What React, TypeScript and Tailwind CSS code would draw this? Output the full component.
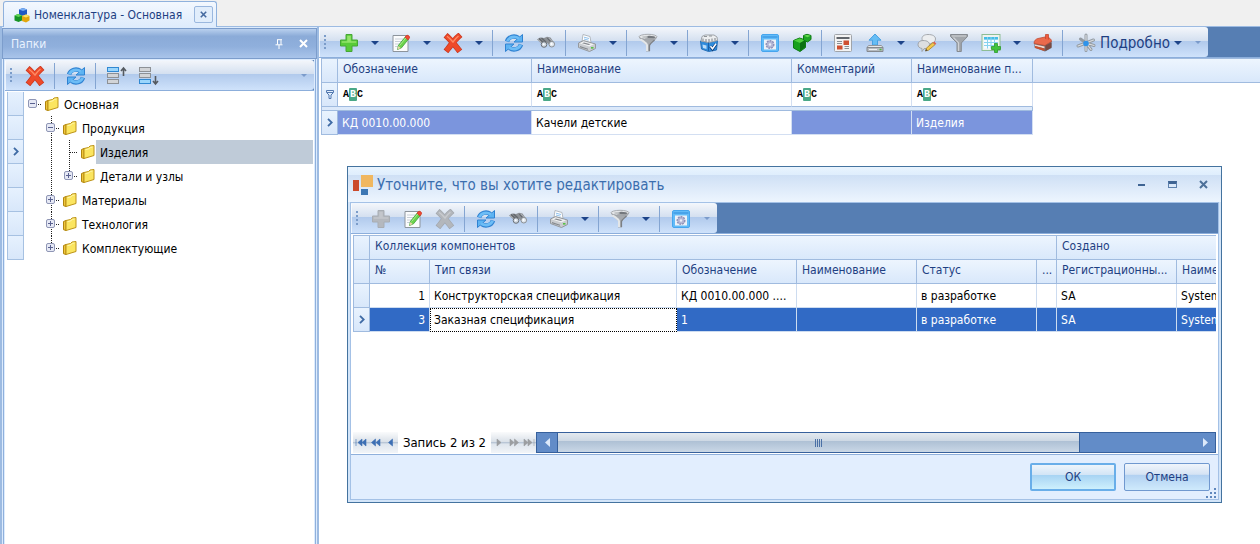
import type { ReactNode } from 'react';

type IconProps = { children: ReactNode; size?: string };

function Icon({ children, size = 'w-5 h-5' }: IconProps) {
  return (
    <svg viewBox="0 0 20 20" className={`${size} shrink-0`} fill="none" aria-hidden="true">
      {children}
    </svg>
  );
}

/* ---------- Toolbar icons ---------- */

function PlusIcon({ disabled = false }: { disabled?: boolean }) {
  return (
    <Icon>
      <path
        d="M7 1.5h6V7h5.500v6H13v5.500H7V13H1.500V7H7z"
        fill={disabled ? '#b4b8be' : '#58cb38'}
        stroke={disabled ? '#a8adb3' : '#46a636'}
        strokeLinejoin="round"
      />
      <path d="M8.200 2.700h3.600v5.500h5.500v1.600H2.700V8.200h5.500z" fill={disabled ? '#c3c6cb' : '#93e46a'} />
    </Icon>
  );
}

function CrossIcon({ disabled = false }: { disabled?: boolean }) {
  const shape = 'M4.800 4.200C8 7 11.500 11.500 15 16M15.200 3.800C11.500 7 8 12 4.800 16';
  return (
    <Icon>
      <path d={shape} stroke={disabled ? '#a2a7ad' : '#c8371f'} strokeWidth="6" strokeLinecap="square" />
      <path d={shape} stroke={disabled ? '#b3b7bc' : '#ee4a2a'} strokeWidth="4.600" strokeLinecap="square" />
      <path d="M4 3.200c3 2.200 4.500 4 6 5.800 1.600-2.200 3-4 5.500-6" stroke={disabled ? '#c8cbcf' : '#ff8a63'} strokeWidth="1.400" />
    </Icon>
  );
}

function EditIcon() {
  return (
    <Icon>
      <path d="M2 2.500h15v16H2z" fill="#fbfcfd" stroke="#8d949c" />
      <path d="M4 6h8M4 8.500h7M4 11h5M4 13.500h3" stroke="#c9d0d8" />
      <path d="m6.500 16.500 1-4.200 7-8.600 3 2.400-7 8.700z" fill="#6bd34c" stroke="#3b9e35" strokeWidth=".8" />
      <path d="m14 4.400 1.400-1.800c1.600-.9 3.600.8 3 2.300L17 6.800z" fill="#ef4a35" stroke="#d5402d" />
      <path d="m6.500 16.500.8-3.400 2.500 2z" fill="#e9d6a8" />
      <path d="m8.600 12.500 6.200-7.500" stroke="#a8ec8c" />
    </Icon>
  );
}

function RefreshIcon() {
  return (
    <Icon>
      <path d="M3 8.500C4.500 3.500 10.500 2 14.500 5" stroke="#2f82d2" strokeWidth="4.400" />
      <path d="M17 11.500c-1.500 5-7.500 6.500-11.500 3.500" stroke="#2f82d2" strokeWidth="4.400" />
      <path d="M18.500 1.500V9H10z" fill="#5db3f2" stroke="#2f82d2" strokeLinejoin="round" />
      <path d="M1.500 18.500V11H10z" fill="#5db3f2" stroke="#2f82d2" strokeLinejoin="round" />
      <path d="M3.300 8.200C5 4 10.500 2.500 15 5.500" stroke="#6dbdf6" strokeWidth="2.800" />
      <path d="M16.700 11.800c-1.700 4.200-7.200 5.700-11.700 2.700" stroke="#6dbdf6" strokeWidth="2.800" />
    </Icon>
  );
}

function BinocularsIcon() {
  return (
    <Icon>
      <path d="m1 6.500 3-2 4 .5 3-1.200 3.500.8 3.500 5-3 3.500-4-3-3.500 2.500z" fill="#8d9196" />
      <path d="M3 5.500 8 10M5.500 5 10 9M11.500 5l4 4.500" stroke="#62666b" strokeWidth="1.300" />
      <path d="m2 6.500 4 3.800M12.500 4.800l4 4" stroke="#b9bdc1" />
      <circle cx="8" cy="11.500" r="2.800" fill="#cfd8e1" stroke="#6b7076" />
      <circle cx="15.800" cy="11.200" r="2.800" fill="#dfe6ed" stroke="#8b9095" />
      <circle cx="7.700" cy="11.200" r="1" fill="#fff" />
      <circle cx="15.500" cy="11" r="1" fill="#fff" />
    </Icon>
  );
}

function PrinterIcon() {
  return (
    <Icon>
      <path d="m5 8.500 1-7 7 2 1 6z" fill="#fff" stroke="#b3b9c0" />
      <path d="M7 4.200 12 5.500M7 6l4.500 1.200" stroke="#8fc1ee" />
      <path d="m1.500 10 5-2.500L18.500 11v4.500l-6 3-11-4z" fill="#c9ccd0" stroke="#94999e" strokeLinejoin="round" />
      <path d="m2.500 10.200 4-1.700L17 11.200l-4.700 2.200z" fill="#f2f3f4" />
      <path d="m5 10.300 2-.8 6.500 1.700-1.800.8z" fill="#85898e" />
      <path d="m3 13 8 2.800v1L3 14.300z" fill="#83878c" />
      <path d="M14 14.800h2.500" stroke="#56c244" strokeWidth="1.600" />
    </Icon>
  );
}

function FunnelIcon() {
  return (
    <Icon>
      <path d="M1 4c.5 3 5 5 7 8v6.500h4V12c2-3 6.500-5 7-8z" fill="#a5a9ad" />
      <path d="M2.500 6C5 8.500 8 9.500 9 12v6" stroke="#e3e6e8" strokeWidth="2" />
      <path d="M16.500 7c-2 2-4.500 3.500-5 5.500v5.500" stroke="#7b7f84" strokeWidth="1.200" />
      <ellipse cx="10" cy="3.800" rx="9" ry="2.500" fill="#e4e6e8" stroke="#9a9ea3" strokeWidth=".8" />
      <ellipse cx="11.500" cy="4.200" rx="6" ry="1.400" fill="#74787d" />
      <ellipse cx="7" cy="4" rx="3" ry="1" fill="#c4c7ca" />
    </Icon>
  );
}

function FlatFunnelIcon() {
  return (
    <Icon>
      <path d="M1.500 1.500h17v2L12.300 10v8.500H8V10L1.500 3.500z" fill="#a2a6ab" stroke="#868b91" />
      <path d="M3 3h14" stroke="#d2d5d8" />
      <path d="m4.500 4.500 5 5.200V18" stroke="#cfd2d6" strokeWidth="1.200" />
    </Icon>
  );
}

function DatabaseIcon() {
  return (
    <Icon>
      <path d="m1.500 8 8 1.500 9-2-1 9.500-8 1.500-7-2.500z" fill="#2f8bdb" stroke="#2671b8" strokeLinejoin="round" />
      <path d="m2 8 1-4.500L6 2h9l3 2 .5 3.500-9 2z" fill="#eceef0" stroke="#9ea3a8" />
      <path d="M4 5.500V8M7 6v3M10 6v3M13 5.500V8M16 5v2.500M5 3.500h3M10 3h3" stroke="#8e9398" strokeWidth="1.200" />
      <path d="m3.500 11.500 4 1V16l-3.500-1z" fill="#b9dcf8" />
      <path d="M9.500 9.500V18" stroke="#1b5fa6" />
      <path d="m11.500 13.500 2 2.500 3.500-5" stroke="#0f3f7d" strokeWidth="3" />
      <path d="m11.500 13.300 2 2.500 3.500-5" stroke="#fff" strokeWidth="1.500" />
    </Icon>
  );
}

function WindowGearIcon() {
  return (
    <Icon>
      <rect x="1.500" y="1.500" width="17" height="17" rx="1.500" fill="#62bbf8" stroke="#46a5ee" />
      <path d="M2.500 4h15" stroke="#2f8bdc" />
      <path d="M4 6.500h12v10H4z" fill="#eef2f8" />
      <circle cx="10" cy="11.500" r="3.500" fill="#b0b2cf" stroke="#8e90b8" strokeWidth="2" strokeDasharray="1.800 .8" />
      <circle cx="10" cy="11.500" r="3" fill="#b4b6d4" />
      <circle cx="10" cy="11.500" r="1.200" fill="#eceefa" />
    </Icon>
  );
}

function GreenCubesIcon() {
  return (
    <Icon>
      <path d="m1.500 7.500 6-2.500 6 2v7.500l-5.500 4-6.500-3.500z" fill="#17a01c" stroke="#0d7a13" />
      <path d="m2 7.500 5.500-2L13 7.200 8 10z" fill="#4fd03c" />
      <path d="M8 10v8l5-3.700V7.200z" fill="#0a7111" />
      <path d="m11.500 2.500 3.500-1.200 4 1.200v4L15.500 9l-4-2z" fill="#1fa624" stroke="#0d7a13" />
      <path d="m12 2.700 3-1 3.500 1-3 1.600z" fill="#66da52" />
    </Icon>
  );
}

function ReportIcon() {
  return (
    <Icon>
      <rect x="1.500" y="1.500" width="17" height="17" rx="1" fill="#f3f3f3" stroke="#a0a4a9" />
      <path d="M3.500 5h13" stroke="#60656b" strokeWidth="2" />
      <path d="M4 8.500h5M4 10.500h5M11.500 13.500H16M11.500 15.500H16" stroke="#8b9095" />
      <path d="M10.500 7.500H16V12h-5.500zM4 12.500h5.500v4H4z" fill="#cf4f30" />
    </Icon>
  );
}

function UploadIcon() {
  return (
    <Icon>
      <path d="m10 1 6 6.200h-3.500V12h-5V7.200H4z" fill="#66bdf4" stroke="#48a0e2" strokeLinejoin="round" />
      <path d="m3.500 12.500-1.500 2h16l-1.500-2z" fill="#e4e7ea" stroke="#92979d" />
      <path d="M2 14.500h16v4H2z" fill="#b6bbc1" stroke="#85898f" />
      <path d="M4 16.500h8" stroke="#eef0f2" />
      <path d="M14.500 16.500h2" stroke="#4dba3c" strokeWidth="1.500" />
    </Icon>
  );
}

function CommentIcon() {
  return (
    <Icon>
      <path d="M11 1.500c4.500 0 7.500 1.500 7.500 4.500 0 2.500-2 4-4.500 4.300L12 12v-1.700C8 10.300 5 8.500 5 5.500c0-2.500 2.500-4 6-4z" fill="#eceef0" stroke="#a5a9ae" />
      <path d="M6 7.500c4 0 6.500 1.500 6.500 4.200 0 2.600-2.500 4-5.500 4l-2 2.800v-3c-2.500-.4-4-1.800-4-3.800C1 9 3 7.500 6 7.500z" fill="#dcdee1" stroke="#a0a4a9" />
      <path d="m8.500 18 1-3 6.500-5.500 2 2.200-6.500 5.500z" fill="#f3c84c" stroke="#a9822b" strokeWidth=".8" />
      <path d="m16 9.500 1.300-1 2 2.200-1.300 1z" fill="#e0604c" />
      <path d="m8.200 18.300.9-2.200 1.500 1.500z" fill="#474747" />
    </Icon>
  );
}

function TableAddIcon() {
  return (
    <Icon>
      <rect x="1" y="1.500" width="18" height="16" fill="#eef3ee" stroke="#8dbd95" />
      <path d="M3 4h14v11.500H3z" fill="#f5fbff" />
      <path d="M3 4h14v2.500H3z" fill="#43bde8" />
      <path d="M3 6.500h14M3 9.500h14M3 12.500h14M6.500 4v11.500M10 4v11.500M13.500 4v11.500" stroke="#86d3ef" />
      <path d="M13.500 10.500h3v3h3v3h-3v3h-3v-3h-3v-3h3z" fill="#3fc43c" stroke="#2c9a2a" strokeWidth=".8" />
    </Icon>
  );
}

function MailboxIcon() {
  return (
    <Icon>
      <path d="m1.500 9 9-4 8 3v7L12 18.500 1.500 14.500z" fill="#6a6d73" />
      <path d="M1 10.500C1 7.500 3 6 5 5.500L12 4c4 0 6.500 2 6.500 4.500L12 12.500z" fill="#ea6a4c" stroke="#c14b33" strokeWidth=".8" />
      <path d="m2 11.500 9.500 2v2L2 13z" fill="#f3d9cf" />
      <path d="m2 13 9.500 2.500V18L2 15z" fill="#c9512f" />
      <path d="m12.500 12.500 6-3v5l-6 3.500z" fill="#7b4a42" />
      <path d="M12.500 6V1.500h3v5" fill="#ef5a3e" stroke="#c14b33" strokeWidth=".8" />
    </Icon>
  );
}

function DetailsIcon() {
  return (
    <Icon>
      <path d="M10 10V2M10 10l7.500-3M10 10l-8 3M10 10l5 6.500M10 10v7.500M10 10 4.500 6M10 10l8 2.500" stroke="#949ba2" strokeWidth="3" strokeLinecap="round" />
      <path d="M10 10V2M10 10l7.500-3M10 10l-8 3M10 10l5 6.500M10 10v7.500M10 10l8 2.500" stroke="#d9dde1" strokeWidth="1.200" strokeLinecap="round" />
      <circle cx="10" cy="10.500" r="2.800" fill="#2f93ea" />
    </Icon>
  );
}

function CollapseLevelIcon({ down = false }: { down?: boolean }) {
  const bar = (y: number, active: boolean) => (
    <rect
      x="0.5"
      y={y}
      width="11"
      height="4"
      fill={active ? '#9bd6fc' : '#d2d4d7'}
      stroke={active ? '#3189d2' : '#8d9196'}
    />
  );
  return (
    <Icon>
      {bar(1.5, !down)}
      {bar(7.5, false)}
      {bar(13.5, down)}
      {down ? (
        <path d="M16.500 10v8M14 15l2.500 3 2.500-3" stroke="#555a60" strokeWidth="1.600" />
      ) : (
        <path d="M16.500 10V2M14 5l2.500-3L19 5" stroke="#555a60" strokeWidth="1.600" />
      )}
    </Icon>
  );
}

/* ---------- Small glyphs ---------- */

function Caret({ faint = false }: { faint?: boolean }) {
  return (
    <svg viewBox="0 0 8 4" className={faint ? 'w-1.5 h-[3px] shrink-0' : 'w-2 h-1 shrink-0'} aria-hidden="true">
      <path d="M0 0h8L4 4z" fill={faint ? '#7b9bcb' : '#1d4489'} />
    </svg>
  );
}

function FolderIcon() {
  return (
    <svg viewBox="0 0 16 16" className="w-4 h-4 shrink-0" fill="none" aria-hidden="true">
      <path d="M1.500 5.500 4 4.500v10l-2.500-.8z" fill="#f0c63a" stroke="#b0850f" strokeLinejoin="round" />
      <path d="m4 4.500 4.500-1L10 2l4-.5v10L4 14.500z" fill="#fbe560" stroke="#bd9318" strokeLinejoin="round" />
      <path d="m5.500 5.600 3.500-.8 1.500-1.500 2-.3" stroke="#fff6b0" />
    </svg>
  );
}

function RowArrow() {
  return (
    <svg viewBox="0 0 6 9" className="w-1.5 h-[9px] mx-auto" fill="none" aria-hidden="true">
      <path d="m1 .8 3.700 3.700L1 8.200" stroke="#3f6ba5" strokeWidth="1.800" />
    </svg>
  );
}

function CloseGlyph({ color, className = 'w-[9px] h-[9px]' }: { color: string; className?: string }) {
  return (
    <svg viewBox="0 0 9 9" className={className} fill="none" aria-hidden="true">
      <path d="m1 1 7 7M8 1 1 8" stroke={color} strokeWidth="2" />
    </svg>
  );
}

/* ---------- Toolbar ---------- */

type ToolItem = 'sep' | { label: string; icon: ReactNode; menu?: boolean; disabled?: boolean };

function Toolbar({ items, children, stretch = false }: { items: ToolItem[]; children?: ReactNode; stretch?: boolean }) {
  return (
    <div className="flex h-[31px] bg-[#567eb3] border-b border-[#8caedb]">
      <div
        role="toolbar"
        className={`flex items-center rounded-r-[3px] border-l border-t border-white/70 bg-[linear-gradient(#f2f5fa_0%,#d4e0f0_44%,#b1caec_46%,#cfe2fb_100%)] ${stretch ? 'w-full' : ''}`}
      >
        <span className="ml-1 mr-[7px] h-4 w-0.5 bg-[repeating-linear-gradient(#7b9cc9_0_2px,transparent_2px_4px)]" />
        {items.map((item, i) =>
          item === 'sep' ? (
            <span key={i} className="ml-[3px] mr-[5px] h-[26px] w-px bg-[#84a5d2]" />
          ) : (
            <span key={i} className="flex h-full">
              <button type="button" aria-label={item.label} disabled={item.disabled} className="flex w-8 items-center justify-center">
                {item.icon}
              </button>
              {item.menu && (
                <button type="button" aria-label={`${item.label}: меню`} className="flex w-5 items-center justify-center">
                  <Caret />
                </button>
              )}
            </span>
          )
        )}
        {children}
        <button type="button" aria-label="Настроить панель" className={`flex h-full w-5 items-center justify-center ${stretch ? 'ml-auto' : ''}`}>
          <Caret faint />
        </button>
      </div>
    </div>
  );
}

const folderTools: ToolItem[] = [
  { label: 'Удалить', icon: <CrossIcon /> },
  'sep',
  { label: 'Обновить', icon: <RefreshIcon /> },
  'sep',
  { label: 'Свернуть', icon: <CollapseLevelIcon /> },
  { label: 'Развернуть', icon: <CollapseLevelIcon down /> },
];

const mainTools: ToolItem[] = [
  { label: 'Создать', icon: <PlusIcon />, menu: true },
  { label: 'Изменить', icon: <EditIcon />, menu: true },
  { label: 'Удалить', icon: <CrossIcon />, menu: true },
  'sep',
  { label: 'Обновить', icon: <RefreshIcon /> },
  { label: 'Найти', icon: <BinocularsIcon /> },
  'sep',
  { label: 'Печать', icon: <PrinterIcon />, menu: true },
  'sep',
  { label: 'Фильтр', icon: <FunnelIcon />, menu: true },
  'sep',
  { label: 'Данные', icon: <DatabaseIcon />, menu: true },
  'sep',
  { label: 'Настройки', icon: <WindowGearIcon /> },
  { label: 'Компоненты', icon: <GreenCubesIcon /> },
  'sep',
  { label: 'Отчёт', icon: <ReportIcon /> },
  { label: 'Выгрузить', icon: <UploadIcon />, menu: true },
  { label: 'Комментарии', icon: <CommentIcon /> },
  { label: 'Условия', icon: <FlatFunnelIcon /> },
  { label: 'Добавить таблицу', icon: <TableAddIcon />, menu: true },
  { label: 'Почта', icon: <MailboxIcon /> },
  'sep',
];

const dialogTools: ToolItem[] = [
  { label: 'Создать', icon: <PlusIcon disabled />, disabled: true },
  { label: 'Изменить', icon: <EditIcon /> },
  { label: 'Удалить', icon: <CrossIcon disabled />, disabled: true },
  'sep',
  { label: 'Обновить', icon: <RefreshIcon /> },
  { label: 'Найти', icon: <BinocularsIcon /> },
  'sep',
  { label: 'Печать', icon: <PrinterIcon />, menu: true },
  'sep',
  { label: 'Фильтр', icon: <FunnelIcon />, menu: true },
  'sep',
  { label: 'Настройки', icon: <WindowGearIcon /> },
];

/* ---------- Folder tree ---------- */

// cells, left to right: ' ' blank, '|' line, 't' branch, '-' open node, '+' closed node
type TreeRow = { label: string; cells: string; up?: boolean; down?: boolean; selected?: boolean };

const treeRows: TreeRow[] = [
  { label: 'Основная', cells: '-' },
  { label: 'Продукция', cells: ' -', up: true, down: true },
  { label: 'Изделия', cells: ' |t', up: true, down: true, selected: true },
  { label: 'Детали и узлы', cells: ' |+', up: true },
  { label: 'Материалы', cells: ' +', up: true, down: true },
  { label: 'Технология', cells: ' +', up: true, down: true },
  { label: 'Комплектующие', cells: ' +', up: true },
];

function TreeCell({ kind, up, down }: { kind: string; up?: boolean; down?: boolean }) {
  const node = kind === '+' || kind === '-';
  const line = { stroke: '#222', strokeDasharray: '1 1' };
  return (
    <svg viewBox="0 0 18 24" className="w-[18px] h-6 shrink-0" fill="none" aria-hidden="true">
      {kind === '|' && <path d="M9.500 0v24" {...line} />}
      {kind === 't' && <path d="M9.500 0v24M10 12.500h8" {...line} />}
      {node && up && <path d="M9.500 0v7" {...line} />}
      {node && down && <path d="M9.500 17v7" {...line} />}
      {node && (
        <>
          <path d="M14 12.500h4" {...line} />
          <rect x="4.500" y="7.500" width="8" height="8" rx="1.500" fill="#e6e9f5" stroke="#8f96b5" />
          <path d={kind === '+' ? 'M6 11.500h5M8.500 9v5' : 'M6 11.500h5'} stroke="#5a6190" />
        </>
      )}
    </svg>
  );
}

function FolderTree() {
  return (
    <ul role="tree" className="flex-1 bg-white pl-0.5 pr-px pt-px">
      {treeRows.map((row) => (
        <li key={row.label} role="treeitem" aria-selected={!!row.selected} className="flex h-6">
          <span className="flex w-[17px] items-center border-x border-b border-[#a6c1e2] bg-linear-to-b from-[#e6f1fe] to-[#d8e7fa]">
            {row.selected && <RowArrow />}
          </span>
          {row.cells.split('').map((kind, i) => (
            <TreeCell key={i} kind={kind} up={row.up} down={row.down} />
          ))}
          <span className="flex w-[18px] items-center pl-0.5">
            <FolderIcon />
          </span>
          <span className={`flex flex-1 items-center pl-1 pt-px ${row.selected ? 'bg-[#bfcbd8]' : ''}`}>{row.label}</span>
        </li>
      ))}
    </ul>
  );
}

function FolderPanel() {
  return (
    <aside className="flex w-[319px] shrink-0 flex-col border-x-2 border-[#9dbbe2] bg-[#dcebfd] pt-px">
      <header className="flex h-[31px] items-center border border-[#7c9dcc] bg-[linear-gradient(#b9d0ee_0%,#8babd8_25%,#8fafdc_60%,#a9c4ea_100%)] pl-2 pr-1 text-[12px] text-[#e9f2ff]">
        <h2 className="flex-1">Папки</h2>
        <button type="button" aria-label="Закрепить" className="mr-2 p-1">
          <svg viewBox="0 0 8 10" className="w-2 h-2.5" fill="none" aria-hidden="true">
            <path d="M2.500 1v4.500M6 1v4.500M2 .7h5M.5 5.800h7M4 6v4" stroke="#fff" />
          </svg>
        </button>
        <button type="button" aria-label="Закрыть панель" className="p-1">
          <CloseGlyph color="#fff" />
        </button>
      </header>
      <div className="flex flex-1 flex-col border-x border-[#8fb0dc] mx-px px-px pt-px">
        <Toolbar items={folderTools} stretch />
        <FolderTree />
      </div>
    </aside>
  );
}

/* ---------- Grids ---------- */

const headCell = 'h-6 truncate border-r border-b border-[#a0bbdf] px-[5px] pb-1 text-left font-normal text-[#1e3f82] bg-linear-to-b from-[#edf5fe] to-[#d9e8fb]';
const markCell = 'h-6 border-x border-b border-[#a0bbdf] bg-linear-to-b from-[#e9f3fe] to-[#d8e7fa]';

function AbcFilter({ name }: { name: string }) {
  return (
    <label className="flex items-center pl-[5px]">
      <span aria-hidden="true" className="flex items-center font-['Liberation_Mono',monospace] text-[10px] leading-[13px] font-bold text-black">
        A<span className="w-2 rounded-[1px] bg-[#4ba887] text-center text-white">B</span>C
      </span>
      <input aria-label={`Фильтр: ${name}`} className="min-w-0 flex-1 bg-transparent px-1 outline-none" />
    </label>
  );
}

const mainColumns = ['Обозначение', 'Наименование', 'Комментарий', 'Наименование п...'];

function MainGrid() {
  const selected = 'h-6 border-r border-b border-[#d3dff2] bg-[#7b95dd] px-1 text-white';
  return (
    <table className="w-full table-fixed border-separate border-spacing-0 border-t border-[#a0bbdf]">
      <colgroup>
        <col className="w-[17px]" />
        <col className="w-[194px]" />
        <col className="w-[260px]" />
        <col className="w-[120px]" />
        <col className="w-[121px]" />
        <col />
      </colgroup>
      <thead>
        <tr>
          <th className={markCell} />
          {mainColumns.map((name) => (
            <th key={name} className={headCell}>{name}</th>
          ))}
          <th className={`${headCell} border-r-0`} />
        </tr>
      </thead>
      <tbody>
        <tr>
          <td className={markCell}>
            <svg viewBox="0 0 8 9" className="w-2 h-[9px] mx-auto" fill="none" aria-hidden="true">
              <path d="M.5.500h7v2L5 5v3.500H3V5L.5 2.500zM1 2.500h6" stroke="#5379b0" />
            </svg>
          </td>
          {mainColumns.map((name) => (
            <td key={name} className="h-6 border-r border-b border-[#a0bbdf] border-r-[#d3dff2] bg-white">
              <AbcFilter name={name} />
            </td>
          ))}
          <td />
        </tr>
        <tr>
          <td colSpan={5} className="h-1 border-x border-b border-[#a0bbdf] bg-[#dce9fa]" />
          <td />
        </tr>
        <tr>
          <td className={markCell}><RowArrow /></td>
          <td className={selected}>КД 0010.00.000</td>
          <td className="h-6 border-r border-b border-[#d3dff2] bg-white px-1 text-black">Качели детские</td>
          <td className={selected} />
          <td className={selected}>Изделия</td>
          <td />
        </tr>
      </tbody>
    </table>
  );
}

const components = [
  { no: 1, link: 'Конструкторская спецификация', code: 'КД 0010.00.000 ....', status: 'в разработке', reg: 'SA', name: 'System' },
  { no: 3, link: 'Заказная спецификация', code: '1', status: 'в разработке', reg: 'SA', name: 'System' },
];

function ComponentsGrid() {
  return (
    <table className="w-full table-fixed border-separate border-spacing-0 border-t border-[#a0bbdf]">
      <colgroup>
        <col className="w-[17px]" />
        <col className="w-[60px]" />
        <col className="w-[247px]" />
        <col className="w-[120px]" />
        <col className="w-[120px]" />
        <col className="w-[120px]" />
        <col className="w-[20px]" />
        <col className="w-[120px]" />
        <col />
      </colgroup>
      <thead>
        <tr>
          <th className={markCell} />
          <th colSpan={6} className={headCell}>Коллекция компонентов</th>
          <th colSpan={2} className={`${headCell} border-r-0`}>Создано</th>
        </tr>
        <tr>
          <th className={markCell} />
          <th className={headCell}>№</th>
          <th className={headCell}>Тип связи</th>
          <th className={headCell}>Обозначение</th>
          <th className={headCell}>Наименование</th>
          <th className={headCell}>Статус</th>
          <th className={`${headCell} pr-0 text-clip`}>...</th>
          <th className={`${headCell} pr-0`}>Регистрационны...</th>
          <th className={`${headCell} border-r-0 pr-0 text-clip`}>Наименование</th>
        </tr>
      </thead>
      <tbody>
        {components.map((row, i) => {
          const active = i === 1;
          const cell = `h-6 truncate border-r border-b border-[#cddcf0] px-1 ${active ? 'bg-[#316ac5] text-white' : 'bg-white text-black'}`;
          return (
            <tr key={row.no}>
              <td className={markCell}>{active && <RowArrow />}</td>
              <td className={`${cell} text-right`}>{row.no}</td>
              {active ? (
                <td className="h-6 border border-dotted border-black bg-white px-[3px] text-black">{row.link}</td>
              ) : (
                <td className={cell}>{row.link}</td>
              )}
              <td className={`${cell} pr-0`}>{row.code}</td>
              <td className={cell} />
              <td className={cell}>{row.status}</td>
              <td className={cell} />
              <td className={cell}>{row.reg}</td>
              <td className={`${cell} border-r-0 pr-0 text-clip`}>{row.name}</td>
            </tr>
          );
        })}
      </tbody>
    </table>
  );
}

/* ---------- Record navigator and scroll bar ---------- */

const navShapes = {
  first: 'M1 1v7M7 1 3 4.500 7 8zM11 1 7 4.500 11 8z',
  prevPage: 'M5.500 1 1.500 4.500l4 3.500zM10 1 6 4.500 10 8z',
  prev: 'M7.500 1 3.500 4.500l4 3.500z',
  next: 'M4 1l4 3.500L4 8z',
  nextPage: 'M2 1l4 3.500L2 8zM6.500 1l4 3.500-4 3.500z',
  last: 'M1 1l4 3.500L1 8zM5 1l4 3.500L5 8zM11 1v7',
};

function NavButton({ shape, label, disabled = false }: { shape: keyof typeof navShapes; label: string; disabled?: boolean }) {
  const color = disabled ? '#9c9ea1' : '#3d6fb4';
  return (
    <button
      type="button"
      aria-label={label}
      disabled={disabled}
      className="flex w-[15px] items-center justify-center bg-[linear-gradient(#fafbfc_0%,#d9e0e8_48%,#b9c6d6_50%,#dfe6ee_58%,#f1f4f8_100%)]"
    >
      <svg viewBox="0 0 12 9" className="w-3 h-[9px]" aria-hidden="true">
        <path d={navShapes[shape]} fill={color} stroke={color} strokeWidth=".6" />
      </svg>
    </button>
  );
}

function RecordBar() {
  return (
    <div className="flex h-[21px]">
      <NavButton shape="first" label="Первая запись" />
      <NavButton shape="prevPage" label="Предыдущая страница" />
      <NavButton shape="prev" label="Предыдущая запись" />
      <span className="flex w-[93px] items-center justify-center text-[13px] text-black">Запись 2 из 2</span>
      <NavButton shape="next" label="Следующая запись" disabled />
      <NavButton shape="nextPage" label="Следующая страница" disabled />
      <NavButton shape="last" label="Последняя запись" disabled />
      <div className="flex flex-1 border border-[#36609c] bg-[#628cc8]">
        <button type="button" aria-label="Прокрутить влево" className="flex w-5 items-center justify-center">
          <svg viewBox="0 0 5 9" className="w-[5px] h-[9px]" aria-hidden="true">
            <path d="M5 0v9L0 4.500z" fill="#dce9fa" />
          </svg>
        </button>
        <div className="flex-1">
          <div className="flex h-full w-[82%] items-center justify-center border-x border-[#36609c] bg-[linear-gradient(#e3e9ef_0%,#cdd8e4_42%,#afc1d5_44%,#c9d7e6_100%)]">
            <span className="h-2 w-[7px] bg-[repeating-linear-gradient(90deg,#4a70a6_0_1px,transparent_1px_2px)]" />
          </div>
        </div>
        <button type="button" aria-label="Прокрутить вправо" className="flex w-5 items-center justify-center">
          <svg viewBox="0 0 5 9" className="w-[5px] h-[9px]" aria-hidden="true">
            <path d="M0 0v9l5-4.500z" fill="#dce9fa" />
          </svg>
        </button>
      </div>
    </div>
  );
}

/* ---------- Dialog ---------- */

function EditDialog() {
  return (
    <section
      role="dialog"
      aria-labelledby="dialog-title"
      className="absolute left-[347px] right-[38px] top-[166px] flex h-[337px] flex-col border border-[#44739f] bg-[#d3e5f9] px-0.5 pb-0.5"
    >
      <header className="-mx-0.5 flex h-[35px] shrink-0 items-center bg-[linear-gradient(#e9f4fe_0%,#dfeefd_22%,#cfe0f5_24%,#edf5fe_100%)] pl-[5px] pr-0.5">
        <svg viewBox="0 0 20 20" className="w-5 h-5" aria-hidden="true">
          <path d="M0 5h6v11H0z" fill="#cb4a2b" />
          <path d="M8 0h12v12H8z" fill="#f0b760" />
          <path d="M8 14h7v6H8z" fill="#3c77b4" />
        </svg>
        <h2 id="dialog-title" className="flex-1 pl-1 text-[15px] text-[#3b6eae]">
          Уточните, что вы хотите редактировать
        </h2>
        <button type="button" aria-label="Свернуть" className="flex h-5 w-[31px] items-center justify-center">
          <span className="h-0.5 w-[7px] bg-[#3f6493]" />
        </button>
        <button type="button" aria-label="Развернуть" className="flex h-5 w-[31px] items-center justify-center">
          <span className="h-[7px] w-[9px] border border-t-[3px] border-[#5e81ad] border-t-[#3f6493]" />
        </button>
        <button type="button" aria-label="Закрыть" className="flex h-5 w-[31px] items-center justify-center">
          <CloseGlyph color="#4d7099" />
        </button>
      </header>
      <div className="flex flex-1 flex-col border border-[#a4c1e6] bg-[#e2eefe]">
        <Toolbar items={dialogTools} />
        <div className="flex flex-1 flex-col border-b border-[#8fb0dc] bg-white pt-px pb-px px-0.5">
          <div className="flex-1">
            <ComponentsGrid />
          </div>
          <RecordBar />
        </div>
        <footer className="relative flex h-11 items-center justify-end gap-2 pr-2 text-[#1e3f82]">
          <button
            type="button"
            className="h-7 w-[86px] rounded-xs border-2 border-[#69aee9] bg-[linear-gradient(#eef5fb_0%,#d3e5f6_40%,#a7d3f3_42%,#cdf0fd_100%)]"
          >
            ОК
          </button>
          <button
            type="button"
            className="h-7 w-[86px] rounded-xs border border-[#7098cf] bg-[linear-gradient(#f0f5fb_0%,#d5e3f4_40%,#b1d0f1_42%,#cfeafc_100%)]"
          >
            Отмена
          </button>
          <svg viewBox="0 0 10 10" className="absolute bottom-px right-0.5 h-2.5 w-2.5" aria-hidden="true">
            <path d="M8 0h2v2H8zM4 4h2v2H4zM8 4h2v2H8zM0 8h2v2H0zM4 8h2v2H4zM8 8h2v2H8z" fill="#5f87bd" />
          </svg>
        </footer>
      </div>
    </section>
  );
}

export default function App() {
  return (
    <div className="relative flex h-screen min-h-[520px] flex-col overflow-hidden bg-white font-['DejaVu_Sans_Condensed','DejaVu_Sans',sans-serif] text-[12px] leading-4 text-black">
      {/* Document tabs */}
      <div className="flex h-[27px] items-end border-b border-[#9dbbe2] bg-[#f0f0f0] pl-[3px]">
        <div className="-mb-px flex h-[26px] items-center rounded-t-[3px] border border-b-0 border-[#8fb1dd] bg-linear-to-b from-[#f3f8fe] to-[#deebfc] pl-2.5 pr-[3px]">
          <svg viewBox="0 0 16 16" className="mr-1 w-4 h-4" aria-hidden="true">
            <path d="m5 2.500 4-1.500 4 1.500v5L9 9 5 7.500z" fill="#1f5ac4" />
            <path d="m5 2.500 4-1.500 4 1.500L9 4z" fill="#78adf2" />
            <path d="m.5 8.500 3.500-1.500L8 8.500v5L4.500 15 .5 13.500z" fill="#169426" />
            <path d="m.5 8.500 3.500-1.500L8 8.500 4.500 10z" fill="#63d556" />
            <path d="m8 9 4-1.500L15.500 9v4.500L12 15.500 8 14z" fill="#e2a70d" />
            <path d="m8 9 4-1.500L15.500 9 12 10.500z" fill="#fbe365" />
          </svg>
          <a href="#nomenclature" className="text-[#1e3f82]">Номенклатура - Основная</a>
          <button
            type="button"
            aria-label="Закрыть вкладку"
            className="ml-3 flex h-[17px] w-[19px] items-center justify-center rounded-xs border border-[#9ab7de] bg-[#e1edfb]"
          >
            <CloseGlyph color="#44699f" className="w-[7px] h-[7px]" />
          </button>
        </div>
      </div>

      <div className="flex min-h-0 flex-1">
        <FolderPanel />
        <main className="min-w-0 flex-1 bg-white">
          <Toolbar items={mainTools}>
            <button type="button" className="flex h-full items-center pl-2 pr-1.5 text-[15px] text-[#1e3f82]">
              <DetailsIcon />
              <span className="px-1">Подробно</span>
              <Caret />
            </button>
          </Toolbar>
          <div className="pl-0.5">
            <MainGrid />
          </div>
        </main>
      </div>

      <EditDialog />
    </div>
  );
}
